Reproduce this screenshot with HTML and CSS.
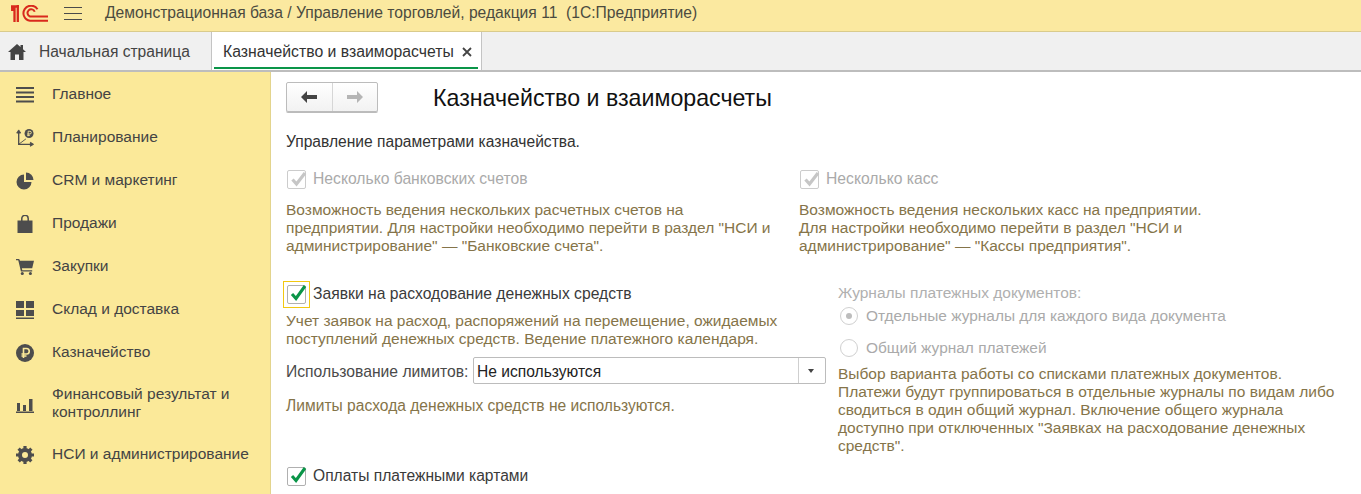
FILE: index.html
```html
<!DOCTYPE html>
<html lang="ru">
<head>
<meta charset="utf-8">
<title>Казначейство и взаиморасчеты</title>
<link rel="stylesheet" href="styles.css">
</head>
<body>
<header class="topbar">
  <svg class="logo" width="37" height="17" viewBox="0 0 37 17"><path d="M0 1.500h8M1.200 1v5M6.800 0v17M3.500 1.500V17" stroke="#d9291c" stroke-width="2.300" fill="none"/><path d="M26.500 4.200A7.600 7.600 0 1 0 19 15.800H37" stroke="#d9291c" stroke-width="2" fill="none"/><path d="M23.700 6.800A3.700 3.700 0 1 0 19 11.500H37" stroke="#d9291c" stroke-width="2" fill="none"/></svg>
  <svg class="burger" width="18" height="13" viewBox="0 0 18 13"><path d="M0 .5h18M0 6.500h18M0 12.500h18" stroke="#4a4a4a" fill="none"/></svg>
  <span class="app-title">Демонстрационная база / Управление торговлей, редакция 11 &nbsp;(1С:Предприятие)</span>
</header>
<nav class="tabs">
  <div class="tab tab-home">
    <svg class="tab-icon" width="18" height="16" viewBox="0 0 18 16"><path d="M9 0 0 8h2.500v8h4.500v-5.500h4V16h4.500V8H18l-3-2.700V1h-2.500v2.100z" fill="#444"/></svg>
    <span>Начальная страница</span>
  </div>
  <div class="tab tab-active">
    <span>Казначейство и взаиморасчеты</span>
    <svg class="tab-close" width="10" height="10" viewBox="0 0 10 10"><path d="M1 1l8 8M9 1L1 9" stroke="#444" stroke-width="1.800" fill="none"/></svg>
  </div>
</nav>
<div class="workspace">
  <aside class="sidebar">
    <a class="menu-item">
      <svg class="menu-icon" viewBox="0 0 18 18"><path d="M0 2h18M0 6.500h18M0 11h18M0 15.500h18" stroke="#4d4d4d" stroke-width="2" fill="none"/></svg>
      <span>Главное</span>
    </a>
    <a class="menu-item">
      <svg class="menu-icon" viewBox="0 0 20 20"><path d="M3 4v13h14" stroke="#4d4d4d" stroke-width="1.500" fill="none"/><path d="M3 1 .8 4.500h4.400zM19.500 17 16 14.800v4.400zM3 17 11 11" stroke="#4d4d4d" fill="#4d4d4d"/><circle cx="14.500" cy="5" r="5" fill="#4d4d4d"/><path d="M13.500 8V2.500h2a1.500 1.500 0 0 1 0 3h-3M12.500 7h3" stroke="#fbe999" fill="none"/></svg>
      <span>Планирование</span>
    </a>
    <a class="menu-item">
      <svg class="menu-icon" viewBox="0 0 18 18"><path d="M8 2.500a7.500 7.500 0 1 0 7.500 7.500H8z" fill="#4d4d4d"/><path d="M10 .5a7.500 7.500 0 0 1 7.500 7.500H10z" fill="#4d4d4d"/></svg>
      <span>CRM и маркетинг</span>
    </a>
    <a class="menu-item">
      <svg class="menu-icon" viewBox="0 0 18 18"><path d="M1.500 5.500h15V18h-15z" fill="#4d4d4d"/><path d="M5.800 8V3.500a3.200 3.200 0 0 1 6.400 0V8" stroke="#4d4d4d" stroke-width="1.500" fill="none"/></svg>
      <span>Продажи</span>
    </a>
    <a class="menu-item">
      <svg class="menu-icon" viewBox="0 0 20 18"><path d="M0 0h3.500l1 2H20l-2 8.500H6.500l.5 2h11v1.500H5.500L2.500 1.500H0z" fill="#4d4d4d"/><circle cx="7" cy="16.300" r="1.700" fill="#4d4d4d"/><circle cx="16" cy="16.300" r="1.700" fill="#4d4d4d"/></svg>
      <span>Закупки</span>
    </a>
    <a class="menu-item">
      <svg class="menu-icon" viewBox="0 0 18 18"><path d="M0 0h8v7H0zM10 0h8v7h-8zM0 9h8v6H0zM10 9h8v6h-8zM0 16.500h18V18H0z" fill="#4d4d4d"/></svg>
      <span>Склад и доставка</span>
    </a>
    <a class="menu-item">
      <svg class="menu-icon" viewBox="0 0 18 18"><circle cx="9" cy="9" r="9" fill="#4d4d4d"/><path d="M7.500 14V4.500h3a2.500 2.500 0 0 1 0 5.500H5.500M5.500 12h5" stroke="#fbe999" stroke-width="1.600" fill="none"/></svg>
      <span>Казначейство</span>
    </a>
    <a class="menu-item menu-item-tall">
      <svg class="menu-icon" viewBox="0 0 18 18"><path d="M1 8h3v8H1zM7 10h3v6H7zM13 4h3.500v12H13zM0 16.500h18V18H0z" fill="#4d4d4d"/></svg>
      <span>Финансовый результат и контроллинг</span>
    </a>
    <a class="menu-item">
      <svg class="menu-icon" viewBox="0 0 18 18"><circle cx="9" cy="9" r="5" fill="none" stroke="#4d4d4d" stroke-width="4"/><path d="M9 0v18M0 9h18M2.600 2.600l12.800 12.800M15.400 2.600 2.600 15.400" stroke="#4d4d4d" stroke-width="3.200" stroke-dasharray="3.200 11.600" fill="none"/></svg>
      <span>НСИ и администрирование</span>
    </a>
  </aside>
  <main class="content">
    <div class="form-head">
      <div class="nav-buttons">
        <button class="nav-btn"><svg width="16" height="12" viewBox="0 0 16 12"><path d="M6 0v4h10v4H6v4L0 6z" fill="#444"/></svg></button>
        <button class="nav-btn"><svg width="16" height="12" viewBox="0 0 16 12"><path d="M10 0v4H0v4h10v4l6-6z" fill="#b5b5b5"/></svg></button>
      </div>
      <h1 class="form-title">Казначейство и взаиморасчеты</h1>
    </div>
    <p class="lead">Управление параметрами казначейства.</p>
    <div class="pair pair-top">
      <section class="col">
        <label class="check disabled">
          <span class="box"><svg width="20" height="20" viewBox="0 0 20 20"><path d="M5.500 9.500 9.500 14 18 3" stroke="#c6c6c6" stroke-width="3.200" fill="none"/></svg></span>
          <span>Несколько банковских счетов</span>
        </label>
        <p class="hint">Возможность ведения нескольких расчетных счетов на предприятии. Для настройки необходимо перейти в раздел "НСИ и администрирование" — "Банковские счета".</p>
      </section>
      <section class="col">
        <label class="check disabled">
          <span class="box"><svg width="20" height="20" viewBox="0 0 20 20"><path d="M5.500 9.500 9.500 14 18 3" stroke="#c6c6c6" stroke-width="3.200" fill="none"/></svg></span>
          <span>Несколько касс</span>
        </label>
        <p class="hint">Возможность ведения нескольких касс на предприятии.<br>Для настройки необходимо перейти в раздел "НСИ и администрирование" — "Кассы предприятия".</p>
      </section>
    </div>
    <div class="pair pair-bottom">
      <section class="col col-left">
        <label class="check focused">
          <span class="box"><svg width="20" height="20" viewBox="0 0 20 20"><path d="M5 9 9 13.500 18 1" stroke="#0a9548" stroke-width="3" fill="none"/></svg></span>
          <span>Заявки на расходование денежных средств</span>
        </label>
        <p class="hint hint-tight">Учет заявок на расход, распоряжений на перемещение, ожидаемых поступлений денежных средств. Ведение платежного календаря.</p>
        <div class="field">
          <span class="field-label">Использование лимитов:</span>
          <div class="select"><span class="select-value">Не используются</span><span class="select-btn"><i class="caret"></i></span></div>
        </div>
        <p class="hint hint-limit">Лимиты расхода денежных средств не используются.</p>
        <label class="check cards">
          <span class="box"><svg width="20" height="20" viewBox="0 0 20 20"><path d="M5 9 9 13.500 18 1" stroke="#0a9548" stroke-width="3" fill="none"/></svg></span>
          <span>Оплаты платежными картами</span>
        </label>
      </section>
      <section class="col col-right">
        <div class="group-title">Журналы платежных документов:</div>
        <div class="radio radio-first"><span class="dot dot-on"></span><span>Отдельные журналы для каждого вида документа</span></div>
        <div class="radio radio-second"><span class="dot"></span><span>Общий журнал платежей</span></div>
        <p class="hint">Выбор варианта работы со списками платежных документов. Платежи будут группироваться в отдельные журналы по видам либо сводиться в один общий журнал. Включение общего журнала доступно при отключенных "Заявках на расходование денежных средств".</p>
      </section>
    </div>
  </main>
</div>
</body>
</html>
```
FILE: styles.css
```css
* { box-sizing: border-box; }
html, body { margin: 0; height: 494px; overflow: hidden; }
body { font-family: "Liberation Sans", Arial, sans-serif; font-size: 15.6px; color: #333; background: #fff; display: flex; flex-direction: column; }
p, h1 { margin: 0; }

.topbar { height: 32px; flex: none; background: #fbe9a0; border-bottom: 1px solid #d9cb8c; padding-bottom: 5px; display: flex; align-items: center; }
.logo { margin-left: 11px; flex: none; }
.burger { margin-left: 16px; flex: none; }
.app-title { margin-left: 23px; color: #4b4b3f; white-space: nowrap; font-size: 15.65px; }

.tabs { height: 40px; flex: none; background: #f0f0f0; border-bottom: 2px solid #bdbdbd; display: flex; }
.tab { display: flex; align-items: center; height: 38px; padding-top: 2px; white-space: nowrap; color: #444; }
.tab-home { width: 211px; padding-left: 8px; gap: 13px; }
.tab-icon { flex: none; }
.tab-active { width: 271px; background: #fff; border-left: 1px solid #c4c4c4; border-right: 1px solid #c4c4c4; padding-left: 11px; position: relative; color: #333; font-size: 15.8px; }
.tab-active::after { content: ""; position: absolute; left: 2px; right: 3px; bottom: 1px; height: 2px; background: #0a9548; }
.tab-close { margin-left: 8px; flex: none; }

.workspace { flex: 1; display: flex; min-height: 0; }
.sidebar { width: 271px; flex: none; background: #fbe999; border-right: 1px solid #e3d48d; padding-top: 1px; font-size: 15.5px; }
.menu-item { display: flex; align-items: center; height: 43px; padding-left: 16px; color: #444; line-height: 18px; }
.menu-item-tall { height: 59px; }
.menu-item span { margin-left: 18px; padding-bottom: 2px; width: 200px; }
.menu-icon { width: 18px; height: 18px; flex: none; }

.content { flex: 1; padding: 10px 0 0 15px; min-width: 0; }
.form-head { display: flex; align-items: center; height: 30px; }
.nav-buttons { display: flex; width: 92px; height: 30px; border: 1px solid #bcbcbc; border-radius: 2px; background: linear-gradient(#fff, #f2f2f2); box-shadow: 0 1px 0 #bbb; }
.nav-btn { flex: 1; border: 0; background: none; padding: 0; display: flex; align-items: center; justify-content: center; }
.nav-btn + .nav-btn { border-left: 1px solid #d6d6d6; }
.form-title { margin-left: 55px; padding-top: 2px; font-size: 23.2px; font-weight: 400; color: #111; white-space: nowrap; }
.lead { margin-top: 21px; line-height: 18px; color: #333; }

.pair { display: flex; }
.pair-top { margin-top: 17px; }
.pair-top .col { width: 513px; }
.pair-top .hint { width: 490px; }
.pair-bottom { margin-top: 28px; }
.col-left { width: 552px; }
.col-right { width: 500px; }

.check { display: flex; align-items: center; height: 22px; padding-left: 1px; gap: 7px; white-space: nowrap; color: #3a3a3a; font-size: 15.7px; }
.check.disabled { color: #aaa; }
.box { width: 19px; height: 19px; flex: none; border: 1px solid #b0b0b0; border-radius: 2px; background: #fff; position: relative; }
.box svg { position: absolute; left: -1px; top: -1px; overflow: visible; }
.check.disabled .box { border-color: #ccc; }
.check.focused .box::after { content: ""; position: absolute; inset: -5px; border: 1px solid #f2c811; }
.hint { color: #857449; font-size: 15.5px; line-height: 18px; margin-top: 11px; width: 500px; }
.hint-tight { margin-top: 7px; }
.field { display: flex; align-items: center; margin-top: 9px; height: 27px; }
.field-label { width: 187px; padding-top: 2px; color: #4a4a4a; white-space: nowrap; font-size: 15.7px; }
.select { width: 353px; height: 27px; border: 1px solid #bcbcbc; border-radius: 2px; display: flex; align-items: center; background: #fff; }
.select-value { flex: 1; padding: 2px 0 0 3px; color: #222; }
.select-btn { width: 27px; height: 25px; padding-right: 3px; border-left: 1px solid #cfcfcf; display: flex; align-items: center; justify-content: center; }
.caret { width: 0; height: 0; border: 3px solid transparent; border-top: 4px solid #444; border-bottom: 0; }
.hint-limit { margin-top: 13px; font-size: 15.6px; }
.cards { margin-top: 50px; font-size: 15.6px; }

.group-title { color: #b0b0b0; font-size: 15.5px; line-height: 18px; margin-top: 1px; }
.radio { display: flex; align-items: center; height: 22px; padding-left: 2px; gap: 8px; color: #aaa; white-space: nowrap; font-size: 15.45px; }
.radio-first { margin-top: 3px; }
.radio-second { margin-top: 10px; }
.dot { width: 18px; height: 18px; border: 1px solid #d0d0d0; border-radius: 50%; flex: none; position: relative; background: #fff; }
.dot-on::after { content: ""; position: absolute; left: 5px; top: 5px; width: 6px; height: 6px; border-radius: 50%; background: #bdbdbd; }
.col-right .hint { margin-top: 6px; }
```
